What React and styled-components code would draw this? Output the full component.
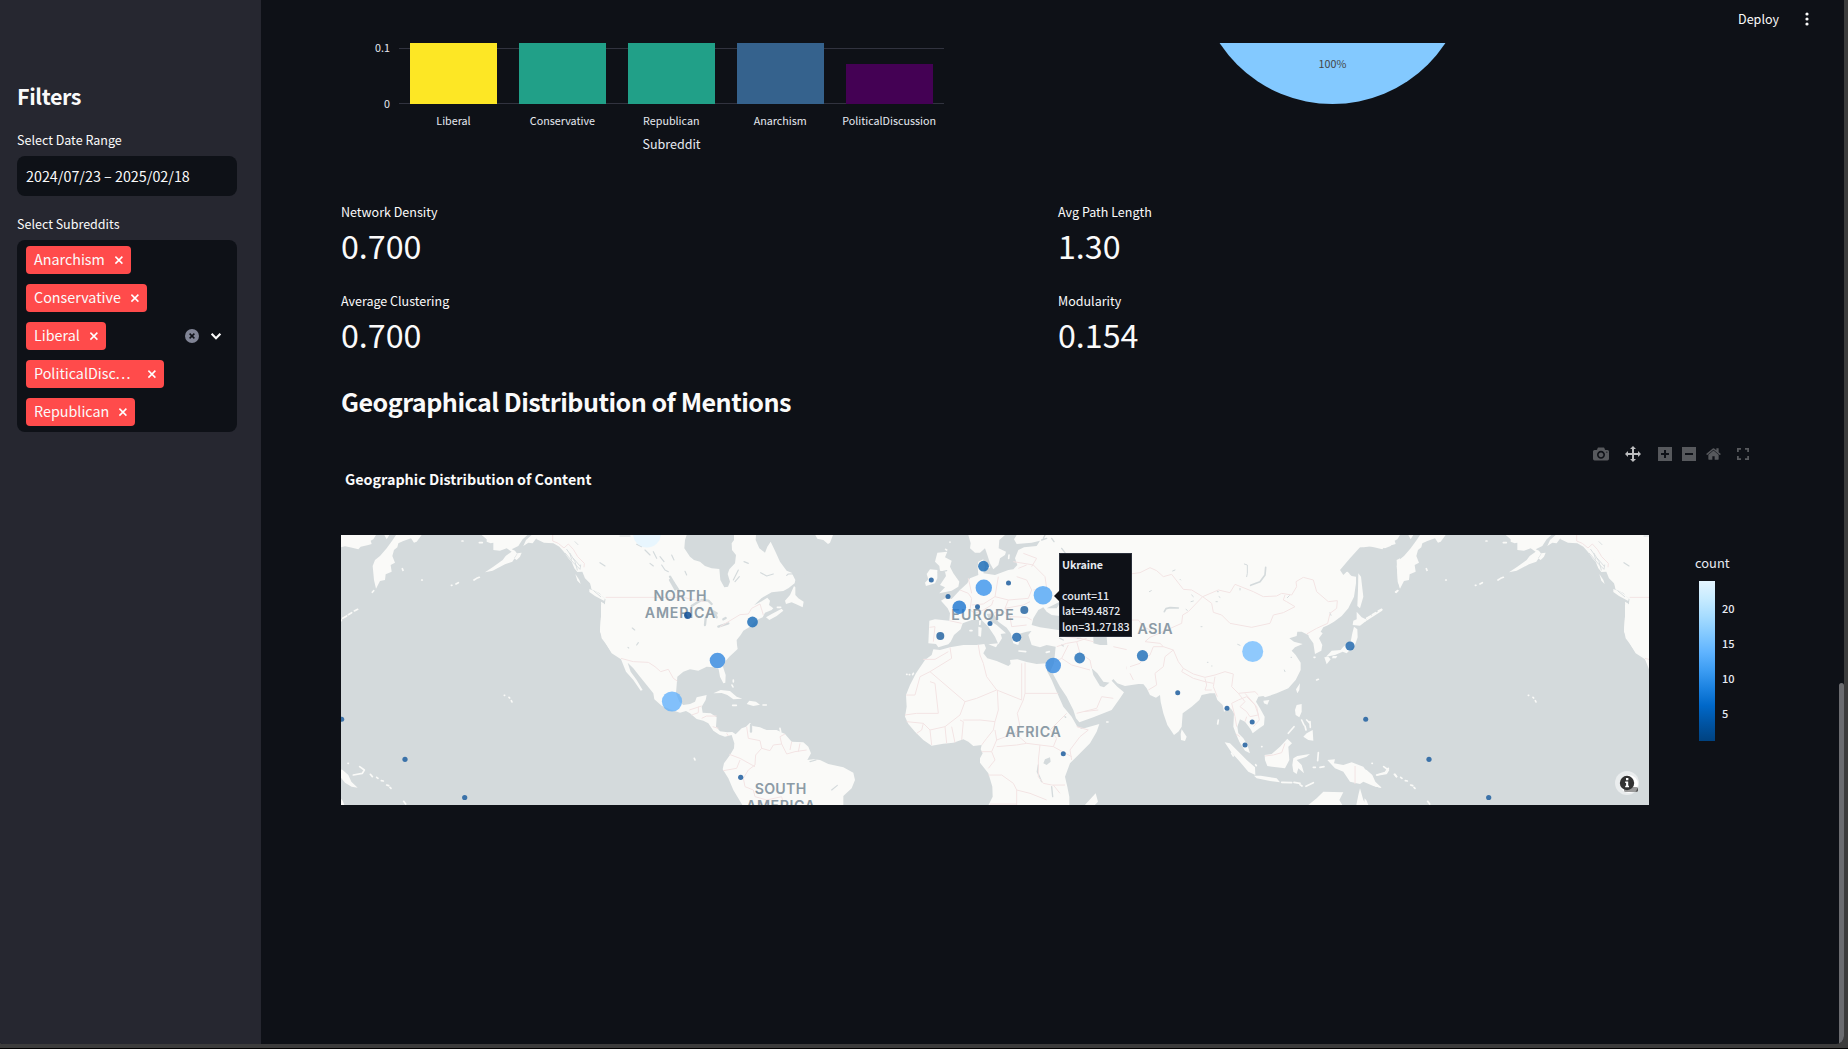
import React from "react";
import styled, { createGlobalStyle, css } from "styled-components";

const GlobalStyle = createGlobalStyle`
  * { box-sizing: border-box; }
  html, body { margin: 0; padding: 0; overflow: hidden; }
  body {
    background: #000;
    color: #fafafa;
    font-family: "Source Sans Pro", "Noto Sans CJK JP", "Noto Sans", sans-serif;
  }
`;

const Frame = styled.div`
  width: 1848px;
  height: 1048px;
  background: #3c3c3c;
  padding: 0 4px 4px 0;
`;

const Shell = styled.div`
  display: flex;
  position: relative;
  width: 1844px;
  height: 1044px;
  background: #0e1117;
  border-radius: 0 0 8px 3px;
  overflow: hidden;
`;

const Scrollbar = styled.div`
  position: absolute;
  right: 0;
  top: 683px;
  bottom: 0;
  width: 5px;
  border-radius: 3px 3px 0 0;
  background: #6b6c70;
`;

const Sidebar = styled.aside`
  flex: 0 0 261px;
  background: #262730;
  padding: 79px 24px 0 17px;
  display: flex;
  flex-direction: column;
`;

const SidebarTitle = styled.h2`
  margin: 0 0 17px;
  font-size: 21.5px;
  line-height: 34px;
  font-weight: 600;
  letter-spacing: -0.4px;
`;

const FieldLabel = styled.label`
  font-size: 12.53px;
  line-height: 20px;
  margin-bottom: 6px;
`;

const DateInput = styled.div`
  height: 40px;
  border-radius: 8px;
  background: #0e1117;
  padding: 0 9px;
  margin-bottom: 18px;
  font-size: 14.33px;
  line-height: 40px;
`;

const MultiSelect = styled.div`
  display: flex;
  align-items: center;
  height: 192px;
  border-radius: 8px;
  background: #0e1117;
  padding: 0 11px 0 9px;
`;

const TagList = styled.div`
  flex: 1;
  display: flex;
  flex-direction: column;
  align-items: flex-start;
  gap: 10px;
`;

const Tag = styled.span`
  display: flex;
  align-items: center;
  justify-content: space-between;
  width: ${(p) => p.$width}px;
  height: 28px;
  padding: 0 7.5px 0 8px;
  border-radius: 4px;
  background: #ff4b4b;
  font-size: 14.33px;
  line-height: 26px;
  white-space: nowrap;
`;

const TagText = styled.span`
  padding-bottom: 2px;
`;

const Ellipsis = styled.span`
  letter-spacing: 1.4px;
`;

const SelectActions = styled.div`
  display: flex;
  align-items: center;
  gap: 7px;
`;

const Main = styled.main`
  flex: 1;
  display: flex;
  flex-direction: column;
`;

const TopBar = styled.header`
  height: 43px;
  display: flex;
  justify-content: flex-end;
  align-items: flex-start;
  gap: 20px;
  padding: 9px 29px 0 0;
  font-size: 12.53px;
  line-height: 20px;
`;

const Content = styled.div`
  padding: 0 0 0 80px;
  display: flex;
  flex-direction: column;
`;

const Columns = styled.div`
  display: grid;
  grid-template-columns: 701px 701px;
  column-gap: 16px;
  svg { display: block; }
`;

const ChartRow = styled(Columns)`
  height: 157px;
`;

const Metric = styled.div`
  height: 89px;
`;

const MetricLabel = styled.div`
  font-size: 12.53px;
  line-height: 24px;
`;

const MetricValue = styled.div`
  font-size: 32.2px;
  line-height: 42px;
`;

const SectionTitle = styled.h3`
  margin: 2px 0 0;
  font-size: 25.1px;
  line-height: 42px;
  font-weight: 600;
  letter-spacing: -0.51px;
`;

const ModeBar = styled.div`
  display: flex;
  align-items: center;
  justify-content: flex-end;
  width: 1408px;
  height: 16px;
  margin-top: 24px;
  color: #57595d;
`;

const ModeIcon = styled.svg`
  flex: none;
  height: 16px;
  width: ${(p) => p.$width}px;
  margin-left: ${(p) => p.$gap}px;
  fill: ${(p) => (p.$active ? "#bdbec0" : "#57595d")};
`;

const ChartTitle = styled.div`
  margin: 4px 0 44px 4px;
  font-size: 14.33px;
  line-height: 25px;
  font-weight: 700;
`;

const MapRow = styled.div`
  display: flex;
  gap: 46px;
`;

const MapFrame = styled.div`
  position: relative;
  width: 1308px;
  height: 270px;
  background: #d4dadc;
  overflow: hidden;
  svg { display: block; }
`;

const Tooltip = styled.div`
  position: absolute;
  left: 718px;
  top: 18px;
  width: 73px;
  height: 84px;
  padding: 2.5px 0 0 2px;
  background: #0e1117;
  border: 1px solid #2a2f3a;
  color: #e6eaf1;
  font-size: 10.74px;
  line-height: 15.6px;
  font-weight: 500;
  letter-spacing: -0.1px;
  white-space: nowrap;
  &::before {
    content: "";
    position: absolute;
    left: -6px;
    top: 36px;
    border: 6px solid transparent;
    border-left: 0;
    border-right-color: #0e1117;
  }
`;

const TooltipTitle = styled.div`
  font-weight: 700;
  margin-bottom: 15.6px;
`;

const Legend = styled.div`
  display: flex;
  flex-direction: column;
  padding-top: 18px;
  color: #e6eaf1;
`;

const LegendTitle = styled.div`
  font-size: 12.9px;
  line-height: 20px;
`;

const LegendBody = styled.div`
  display: flex;
  gap: 7px;
  margin: 8px 0 0 4px;
`;

const Gradient = styled.div`
  width: 16px;
  height: 160px;
  background: linear-gradient(to top, #004280, #0054a3 11.1%, #0068c9 22.2%, #1c83e1 33.3%, #3d9df3 44.4%, #60b4ff 55.6%, #83c9ff 66.7%, #a6dcff 77.8%, #c7ebff 88.9%, #e4f5ff);
`;

const Ticks = styled.div`
  display: flex;
  flex-direction: column;
  padding-top: 17px;
  gap: 15px;
  font-size: 11px;
  line-height: 20px;
  font-weight: 500;
`;

const chartFont = css`
  font-family: "Noto Sans CJK JP", "Noto Sans", sans-serif;
`;

const ChartText = styled.text`
  ${chartFont}
  fill: ${(p) => p.$color || "#e6eaf1"};
  font-size: ${(p) => p.$size || 10.74}px;
  text-anchor: ${(p) => p.$anchor || "middle"};
`;

const Continent = styled.text`
  font-family: Inter, "Open Sans", sans-serif;
  font-size: 14.2px;
  font-weight: 600;
  fill: #8c9ba6;
  text-anchor: middle;
`;

const Land = styled.path`
  fill: #fafaf8;
`;
const Water = styled.path`
  fill: #d4dadc;
`;
const Lakes = styled.path`
  fill: none;
  stroke: #d4dadc;
  stroke-width: ${(p) => p.$w || 4};
  stroke-linecap: round;
  stroke-linejoin: round;
`;
const Islands = styled(Lakes)`
  stroke: #fafaf8;
`;
const Borders = styled.path`
  fill: none;
  stroke: #f3e4e4;
  stroke-width: 3;
  stroke-linejoin: round;
`;

const bars = [
  { name: "Liberal", color: "#fde725", top: 0 },
  { name: "Conservative", color: "#21a088", top: 0 },
  { name: "Republican", color: "#21a088", top: 0 },
  { name: "Anarchism", color: "#35628d", top: 0 },
  { name: "PoliticalDiscussion", color: "#440154", top: 21 },
];

function BarChart() {
  return (
    <svg width="701" height="157">
      <path d="M58 5.5H603M58 60.5H603" stroke="#31333f" />
      {bars.map((b, i) => (
        <g key={b.name}>
          <rect x={69 + i * 109} y={b.top} width="87" height={61 - b.top} fill={b.color} />
          <ChartText x={112.5 + i * 108.9} y="82">{b.name}</ChartText>
        </g>
      ))}
      <ChartText x="49" y="9" $anchor="end">0.1</ChartText>
      <ChartText x="49" y="65" $anchor="end">0</ChartText>
      <ChartText x="330.5" y="106" $size={12.53}>Subreddit</ChartText>
    </svg>
  );
}

function PieChart() {
  return (
    <svg width="701" height="157">
      <circle cx="274.5" cy="-74" r="135" fill="#83c9ff" />
      <ChartText x="274.5" y="25" $color="#444">100%</ChartText>
    </svg>
  );
}

const tags = [
  { name: "Anarchism", width: 105 },
  { name: "Conservative", width: 121 },
  { name: "Liberal", width: 80 },
  { name: "PoliticalDisc", width: 138, truncated: true },
  { name: "Republican", width: 109 },
];

const CloseIcon = () => (
  <svg width="10" height="10" viewBox="0 0 10 10" stroke="#fff" strokeWidth="1.5" fill="none">
    <path d="M1.400 1.600 8.400 8.600M8.400 1.600 1.400 8.600" />
  </svg>
);

const modeIcons = [
  { w: 16, gap: 0, vw: 1000, d: "m500 450c-83 0-150-67-150-150 0-83 67-150 150-150 83 0 150 67 150 150 0 83-67 150-150 150z m400 150h-120c-16 0-34 13-39 29l-31 93c-6 15-23 28-40 28h-340c-16 0-34-13-39-28l-31-94c-6-15-23-28-40-28h-120c-55 0-100-45-100-100v-450c0-55 45-100 100-100h800c55 0 100 45 100 100v450c0 55-45 100-100 100z m-400-550c-138 0-250 112-250 250 0 138 112 250 250 250 138 0 250-112 250-250 0-138-112-250-250-250z m365 380c-19 0-35 16-35 35 0 19 16 35 35 35 19 0 35-16 35-35 0-19-16-35-35-35z" },
  { w: 16, gap: 16, vw: 1000, active: true, d: "m1000 350l-187 188 0-125-250 0 0 250 125 0-188 187-187-187 125 0 0-250-250 0 0 125-188-188 186-187 0 125 252 0 0-250-125 0 187-188 188 188-125 0 0 250 250 0 0-126 187 188z" },
  { w: 14, gap: 17, vw: 875, d: "m1 787l0-875 875 0 0 875-875 0z m687-500l-187 0 0-187-125 0 0 187-188 0 0 125 188 0 0 187 125 0 0-187 187 0 0-125z" },
  { w: 14, gap: 10, vw: 875, d: "m0 788l0-876 876 0 0 876-876 0z m688-500l-500 0 0 125 500 0 0-125z" },
  { w: 15, gap: 10, vw: 928.6, d: "m786 296v-267q0-15-11-26t-25-10h-214v214h-143v-214h-214q-15 0-25 10t-11 26v267q0 1 0 2t0 2l321 264 321-264q1-1 1-4z m124 39l-34-41q-5-5-12-6h-2q-7 0-12 3l-386 322-386-322q-7-4-13-4-7 2-12 7l-35 41q-4 5-3 13t6 12l401 334q18 15 42 15t43-15l136-114v109q0 8 5 13t13 5h107q8 0 13-5t5-13v-227l122-102q5-5 6-12t-4-13z" },
];

/* Each tile is drawn on a grid three times finer than the map itself. */
const Tile = ({ x, children }) => (
  <g transform={`translate(${x} -5) scale(.33333)`}>{children}</g>
);

function World() {
  return (
    <>
      <Tile x={-1}>
        <Land d="M-60 15H108L100 28 92 32 95 42 85 45 62 50 55 58 30 52 15 49 0 52-60 50Z M133 15H148L140 28Z M168 15H245L230 35 222 38 213 25 190 33 175 40 172 52 162 60 157 78 165 98 152 105 155 125 137 133 135 150 120 153 108 176 102 150 98 108 105 90 120 78 140 55 158 30Z" />
        <Land d="M425 15 440 28 440 35 452 40 460 38 460 60 480 62 500 55 515 65 497 78 488 90 460 110 435 127 458 122 495 103 517 95 532 72 525 62 515 58 535 48 548 28 555 22 562 15Z M550 48 558 30 575 15H600L588 26 578 40 565 38Z M522 85 532 70 545 68 540 80 530 90Z" />
        <Land d="M585 15 590 28 612 38 640 40 658 50 672 66 685 85 695 95 703 115 712 126 727 125 735 145 750 160 755 178 775 186 797 208 795 222 783 215 784 240 783 260 780 305 792 328 800 345 812 362 830 370 843 385 860 388V15Z M706 132 718 150 722 162 712 152Z M748 177 770 185 797 205 793 213 765 198 748 186Z" />
        <Islands $w={5} d="M402 150 410 145 418 142M187 116 189 121M245 150H247M334 166H336M348 162 355 158M97 187 101 182M8 265 20 258M25 254 35 248M43 243 53 238M4 272V270M493 496H494M507 502 509 504M514 512 516 516M418 38H427M366 33H369M24 700H25M91 733 97 740M110 742 114 745M124 752 130 753M140 765 146 767M150 772 153 775M191 814 197 822M59 710 73 720 67 730 40 735" />
        <Land d="M-10 715 8 720 25 735 34 755 53 773 35 770 15 758 0 740Z M2 805 8 812 13 825H0Z" />
        <Lakes $w={2.5} d="M680 58 690 72 695 88M690 70 705 95 712 120M700 85 720 108M676 70 700 98 720 118 722 105M762 183 782 200M705 35 714 44M779 95 786 105 797 108 788 112M795 208 793 225" />
        <Borders d="M638 15V33L655 40 672 54 685 42 700 58 713 80 733 100 732 112M797 202H860" />
      </Tile>

      <Tile x={249}>
        <Land d="M-5 15H290L285 30 283 55 300 80 312 90 330 95 345 108 365 115 388 117 391 150 403 172 414 170 420 155 413 132 418 118 435 100 438 75 426 60 425 40 432 30 432 15H498L497 30 508 55 525 68 532 50 542 35 555 62 570 95 590 122 605 128 616 150 614 160 595 175 580 183 545 187 515 204 492 226 515 214 532 203 540 212 537 225 550 235 545 240 525 248 518 262 500 270 480 290 460 302 452 315 440 330 441 345 443 357 418 380 402 398 399 410 407 435 406 458 400 460 390 440 386 418 372 412 350 410 325 422 300 418 280 425 262 440 258 490 268 515 280 525 300 522 315 515 320 502 350 495 347 510 335 530 338 548 362 550 380 562 378 590 390 604 412 607 427 606 437 613 455 595 468 590 480 578 488 588 510 592 530 600 560 600 585 612 605 635 640 637 655 650 663 670 652 690 670 688 690 690 715 702 760 712 790 728 795 750 785 775 760 798V830H460L430 780 415 745 398 718 402 700 420 675 432 655 433 640 425 615 405 620 388 614 370 602 355 580 340 572 320 567 300 550 288 543 270 548 245 540 215 527 193 508 190 490 170 465 150 440 130 415 113 398 122 425 140 450 158 480 152 482 130 450 108 425 93 388 65 370 50 345 35 325 30 300 33 260 33 225 45 222 47 208 30 190 5 178Z" />
        <Land d="M612 168 600 195 585 212 588 222 605 217 622 224 638 232 641 215 625 205 616 195 616 172Z M528 262 545 252 575 236 580 242 560 258 538 270Z M676 15H729L720 38 714 42 700 30 682 26Z M370 490 392 480 420 483 440 500 457 506 430 508 412 495 395 489Z M470 522 478 512 498 515 510 524 490 528Z" />
        <Islands $w={5} d="M428 526H439M519 525H529M426 465 429 471M430 450V456M313 685 315 690M562 232H572M570 595 572 605" />
        <Lakes $w={7} d="M305 228 318 220 335 210 355 212 365 222M345 285 347 265 355 250M362 240 380 250M372 245 380 262M385 290 415 280M400 268 407 264M240 140 255 165 268 185M240 150 256 178M483 585V605" />
        <Lakes $w={3.5} d="M90 18H120M140 43 155 50M165 60 180 75M190 65 200 85M210 80 222 95M215 105 225 120 235 125M245 75 252 90M30 98 45 108M180 100 190 108M250 155 265 180M285 124 290 135M127 294 134 300M140 345 145 338M114 352 116 354M430 150 445 120M435 155 448 140M512 128 530 138 550 132M660 130 595 132 590 136M462 95 475 100M390 95 400 98M725 780 742 766M660 695 678 690" />
        <Borders d="M47 202H280L305 208 345 215M390 290 450 254 475 252 485 235 510 222 520 255M93 385 130 395 175 397 195 410 212 425 235 418 250 445 262 453M298 540 335 528M305 555 325 548 325 530M335 565 350 558 380 558M368 590 385 595M410 610 415 618M470 590 475 625 510 632 515 655 497 675 495 705 475 720 460 745 465 770 490 780M515 655 540 662 550 645 575 642 590 672 615 665 650 660M575 642 570 620 585 612M605 635 600 660M630 640 625 665M418 673 450 685 495 710M400 722 440 715 450 690M490 780 495 800 530 810 575 800 580 820" />
      </Tile>

      <Tile x={539}>
        <Land d="M160 358 180 360 210 352 250 345 290 345 313 342 318 355 310 370 322 385 350 393 385 408 392 402 390 390 412 388 440 396 470 402 500 400 502 425 515 450 530 485 550 530 575 560 592 590 605 597 658 582 650 605 630 640 595 675 570 700 555 740 562 770 568 800 568 830H323L338 800 337 770 325 730 300 698 300 685 308 670 302 658 305 645 280 648 265 635 250 628 220 638 190 641 155 647 130 630 105 605 85 582 75 560 80 530 78 495 90 465 108 430 135 390 155 375Z M647 790 654 815 640 830H610Z" />
        <Land d="M148 272 165 268 208 272 210 250 203 235 183 212 195 205 215 207 240 180 262 160 270 145 295 135 293 110 295 95 310 88 315 110 310 130 345 135 385 120 400 118 412 105 405 85 415 60 432 52 470 48 480 32 455 38 410 42 402 28 410 15H900V465L775 462 735 468 712 460 700 447 690 458 670 455 652 430 635 415 640 435 660 468 672 472 695 452 712 470 732 487 720 505 695 540 640 562 598 577 588 565 580 540 560 500 540 470 518 430 510 425 522 400 527 350 500 345 480 352 455 345 445 315 455 302 490 290 470 300 440 305 415 312 420 325 415 345 400 340 392 310 380 293 355 275 340 250 320 252 330 272 350 285 378 310 362 312 366 325 355 343 345 320 325 290 305 270 275 270 248 280 242 298 222 315 212 335 205 343 175 352 168 342 145 340Z" />
        <Land d="M265 15H375L358 30 356 55 378 65 375 75 360 85 355 105 340 118 330 100 322 75 315 55 300 68 285 68 270 55 272 40Z M172 68 202 65 195 82 215 92 210 110 220 130 238 155 235 170 215 182 178 190 195 172 180 165 190 150 198 138 195 125 180 122 178 108 165 95Z M150 118 172 120 172 145 165 160 138 168 135 158 145 148 140 132Z M325 343 355 340 348 352Z M295 290 305 293 303 320 295 318Z M297 272 303 270 302 285 297 285Z" />
        <Islands $w={5} d="M80 433H81M88 434H89M100 430 98 434M210 36V37M197 58 200 60M417 363 437 365M499 367 508 365M270 302H276M320 112H328M387 75 386 85M680 576H684" />
        <Water d="M455 285 460 265 475 240 490 232 500 245 515 255 540 258 560 275 575 295 535 300 500 295 480 292Z M500 235 520 225 545 212 530 235Z M640 320 655 310 680 320 682 345 660 345 640 340Z M495 688 510 682 512 695 500 705 490 700Z" />
        <Lakes $w={4} d="M485 30 500 25M515 25 522 35M545 55 555 68M540 325 550 330M592 325H602M545 345 550 348M522 455 530 475M506 420 510 432M475 705 472 725 485 755M515 770 518 800M555 560 557 562M175 128 200 122M495 15 490 25" />
        <Borders d="M148 292 165 290 160 335M208 272 245 280M240 180 265 190 275 205 270 240 285 250M265 145 275 190M275 225 310 222 345 200 355 140M345 200 385 210 445 205 455 180 440 150 410 140M285 250 310 240 335 225 340 210M340 250 365 240 390 260 395 290M385 210 375 235 390 260 440 262 455 270M400 95 460 105 495 140 500 175 460 180M430 70 470 85 455 110M415 115 440 105M395 290 440 285M375 235 430 225 450 215M530 350 560 340 590 335 620 325M555 320 600 325 640 335M590 335 600 370 630 390 635 415M565 345 545 385 525 395M545 385 575 405 630 420M610 545 650 535 665 500 700 505M590 550 610 545 655 540M755 132 810 120M700 350 745 360 750 380 810 365M750 380 740 415 760 450M750 320 810 355" />
        <Borders d="M130 388 165 388 205 365M210 352 215 385 150 425 120 440 105 495H78M150 425 255 515 290 505 350 480 425 510V400M295 345 300 375 310 400 320 440 350 480M435 398V490H535M435 490 430 510 412 550 420 590 405 610 440 640 480 645 520 650 530 625 510 600 540 570 560 550M165 460 175 550H110L75 555M165 460 150 455M80 575 130 580 150 600 195 590 240 555 255 515M130 580 125 600 110 610M150 600 155 645M195 590 200 640M215 590 225 638M240 570 250 575 245 630M250 570 300 570 345 575 355 540 352 480M345 575 340 600 320 625 305 645M345 600 350 630 405 610M350 630 335 665 305 665M350 650 410 645 440 640M335 665 345 690 325 715M325 735H365L400 760 410 780 410 825M410 780 450 790 500 810M480 645 475 690 475 740 490 760 515 765 555 765M520 650 575 680M575 690 570 660 600 620 625 600 590 590M520 765 540 790M330 822H410" />
      </Tile>

      <Tile x={789}>
        <Land d="M-10 15H800L782 48 765 55 740 47 690 52 660 85 630 120 640 135 650 125 665 138 678 140 678 160 672 200 655 235 635 258 612 275 595 285 580 292 572 305 578 310 567 325 577 345 574 362 555 372 550 340 537 322 535 315 515 305 502 305 500 318 478 325 492 335 518 342 495 352 485 362 497 375 512 398 512 420 497 450 475 475 440 490 405 502 400 498 385 500 378 515 390 535 404 560 402 585 388 595 368 610 362 598 345 575 330 568 322 590 325 610 340 625 352 645 360 670 345 662 328 635 318 612 310 590 312 550 302 535 282 545 278 525 262 510 255 490 240 490 215 495 208 510 185 530 158 550 155 590 145 605 132 615 112 585 100 550 92 515 90 495 78 503 60 495 50 475 40 462-10 460Z" />
        <Land d="M155 598 170 620 165 633 153 630 152 612Z M685 130 693 140 700 200 690 235 682 228 684 180Z M680 245 695 262 712 270 690 287 668 285 670 272 680 268Z M672 290 682 298 683 322 675 345 650 370 638 365 615 375 588 380 605 362 632 360 640 350 662 335 667 310Z M583 382 595 380 602 388 590 403Z M608 378 622 378 618 385 606 385Z M510 460 508 480 502 490 498 478Z M400 512 418 510 412 524 402 520Z M500 525 515 522 515 545 508 562 497 555 495 540Z M530 610 548 600 550 632 535 630 520 620Z M284 637 300 640 330 670 350 690 375 712 376 735 355 725 325 690 305 668Z M372 737 392 737 440 745 450 757 420 753 380 745Z M404 675 425 672 450 650 472 626 486 640 475 650 478 690 465 715 440 712 412 708 405 690Z M490 685 502 678 540 672 530 680 500 690 515 705 522 730 505 715 500 732 490 725 487 705Z M592 690 615 688 612 700 640 705 665 697 700 710 718 735 730 755 756 774 730 768 700 755 690 762 660 755 640 725 615 715Z M535 825 560 805 580 785 640 787 628 810 640 830H530Z M690 775 700 810 712 830H678L685 795Z M800 90 810 85V175L803 155Z" />
        <Islands $w={5} d="M712 268 755 240M515 570 522 585M530 570 540 580M525 588 528 600M540 575 541 592M475 610 492 590M455 757 485 758M492 757 510 760M528 769 550 758M510 764 516 768M565 668 563 692M550 712 556 712M570 712 582 710M265 570 263 582M395 650H396M377 704 379 707M305 670 310 678M560 450 565 448M552 382H555M740 735 765 728 775 715M795 733 800 740M797 186 803 182M652 128 656 132" />
        <Lakes $w={5} d="M362 166 390 155 405 135 407 112M103 245 108 236 120 233 145 234" />
        <Lakes $w={3} d="M343 102 352 105 352 130 350 140M58 185 64 182M128 123 135 120M150 148 152 150M185 195 190 200M183 215 190 213M262 185H265M267 200 270 202M258 215H262M330 175V180M472 203 478 197M600 248 603 256M213 290H216M323 343 330 346M232 397H234M245 408H246M483 382H485M463 420 465 425M168 238 172 241" />
        <Borders d="M0 132 30 128 60 113 80 122 100 140 125 133 160 178 185 180 218 200 265 180 300 188 315 163 370 185 400 200 440 198 455 190 485 195 500 170 498 155 520 142 550 150 560 185 595 215 622 212 620 235 600 250 593 280 560 295 530 312M218 200 245 220 250 247 275 255 300 280 365 292 420 280 430 255 460 248 495 230 470 215 460 210 465 195M218 200 175 245 158 255 155 280 110 300 60 322 45 335 90 340 100 350 130 360 145 395 160 415 190 432 225 442 255 435 285 425 310 432 305 470 325 490 375 485 385 495M0 270 25 270 40 290 60 300M100 350 70 350 60 375 40 385 30 400 0 410M130 360 105 380 100 410 75 430 80 465 55 480M0 430 10 450M160 415 155 425 190 445 225 455 250 460M225 445 230 465 225 480 245 480M255 440 250 470 262 500M325 490 345 515 330 530 350 545 360 560 385 555 375 525 350 500 325 510 305 520 315 560 320 590M345 575 350 560M345 490 380 530 388 570 370 590M465 640 455 668 430 675 405 678M318 612 330 620" />
        <Borders d="M675 708V762" strokeWidth="5" />
      </Tile>
    </>
  );
}

/* [x, y, radius, colour, opacity] of every bubble */
const bubbles = [
  [306, -1.5, 14, "#e4f5ff", 0.8],
  [346.7, 80.3, 3.6, "#0f4f96", 0.85],
  [411.5, 87, 5.4, "#1f6fb8", 0.85],
  [376.5, 125.5, 7.8, "#2f86df", 0.8],
  [331, 166.5, 10.1, "#60b0fb", 0.78],
  [399.7, 242.3, 2.6, "#2a66a3", 0.9],
  [642.5, 31.2, 5.4, "#1f6fb8", 0.85],
  [590.3, 45, 2.5, "#2a66a3", 0.9],
  [607, 61.5, 2.5, "#2a66a3", 0.9],
  [667.5, 48, 2.5, "#2a66a3", 0.9],
  [642.8, 52.8, 8.2, "#3a93ec", 0.8],
  [618.3, 72.2, 6.8, "#1f78d1", 0.82],
  [636.5, 71.7, 2.5, "#2a66a3", 0.9],
  [683.3, 75, 4, "#20609f", 0.82],
  [649, 88.5, 2.5, "#2a66a3", 0.9],
  [599.3, 101, 4, "#20609f", 0.82],
  [675.7, 102.3, 4.6, "#1d65ac", 0.82],
  [702, 60.2, 9.3, "#4fa5f5", 0.8],
  [712.2, 130.5, 7.8, "#2f86df", 0.8],
  [738.7, 123, 5.4, "#1f6fb8", 0.82],
  [801.5, 120.7, 5.6, "#1f6fb8", 0.82],
  [722.3, 218.7, 2.5, "#2a66a3", 0.9],
  [911.7, 116.5, 10.5, "#6bb8ff", 0.75],
  [836.7, 157.7, 2.5, "#2a66a3", 0.9],
  [886, 173.3, 2.5, "#2a66a3", 0.9],
  [911.2, 187, 2.5, "#2a66a3", 0.9],
  [904, 210, 2.5, "#2a66a3", 0.9],
  [1009, 111, 4.6, "#1d65ac", 0.82],
  [1024.7, 184.3, 2.5, "#2a66a3", 0.9],
  [0.7, 184.3, 2.5, "#2a66a3", 0.9],
  [64, 224.3, 2.6, "#2a66a3", 0.9],
  [1088, 224.3, 2.6, "#2a66a3", 0.9],
  [123.7, 262.5, 2.6, "#2a66a3", 0.9],
  [1147.7, 262.5, 2.6, "#2a66a3", 0.9],
];

const labels = [
  ["NORTH", 339, 66, 53],
  ["AMERICA", 339, 83, 70.5],
  ["EUROPE", 641.5, 85, 62.5],
  ["ASIA", 814, 99, 35],
  ["AFRICA", 692, 202, 55.5],
  ["SOUTH", 439.5, 259, 51.5],
  ["AMERICA", 439.5, 276, 69],
];

function GeoMap() {
  return (
    <MapFrame>
      <svg width="1308" height="270" viewBox="0 0 1308 270">
        <World />
        <g transform="translate(1024 0)">
          <World />
        </g>
        {labels.map(([t, x, y, w], i) => (
          <Continent key={i} x={x} y={y} textLength={w}>{t}</Continent>
        ))}
        {bubbles.map(([x, y, r, c, o], i) => (
          <circle key={i} cx={x} cy={y} r={r} fill={c} fillOpacity={o} />
        ))}
        <circle cx="1286" cy="248" r="12" fill="#fff" fillOpacity=".5" />
        <circle cx="1288" cy="249" r="9" fill="#fff" />
        <rect x="1283" y="252" width="14" height="5" rx="1.500" fill="#999" />
        <path d="M1294.500 257 1297 252.500V256Z" fill="#555" />
        <circle cx="1286" cy="248" r="7.2" fill="#333" />
        <path d="M1285 243h2.4v2.2h-2.4zM1284.2 246.6h3v4.2h.8v1.4h-3.8v-1.4h.9v-2.8h-.9z" fill="#fff" />
      </svg>
      <Tooltip>
        <TooltipTitle>Ukraine</TooltipTitle>
        <div>count=11</div>
        <div>lat=49.4872</div>
        <div>lon=31.27183</div>
      </Tooltip>
    </MapFrame>
  );
}

export default function App() {
  return (
    <Frame>
      <GlobalStyle />
      <Shell>
        <Sidebar>
          <SidebarTitle>Filters</SidebarTitle>
          <FieldLabel>Select Date Range</FieldLabel>
          <DateInput>2024/07/23 – 2025/02/18</DateInput>
          <FieldLabel>Select Subreddits</FieldLabel>
          <MultiSelect>
            <TagList>
              {tags.map((t) => (
                <Tag key={t.name} $width={t.width}>
                  <TagText>
                    {t.name}
                    {t.truncated && <Ellipsis>...</Ellipsis>}
                  </TagText>
                  <CloseIcon />
                </Tag>
              ))}
            </TagList>
            <SelectActions>
              <svg width="14" height="14" viewBox="0 0 14 14">
                <circle cx="7" cy="7" r="7" fill="#808495" />
                <path d="M4.6 4.6 9.4 9.4M9.4 4.6 4.6 9.4" stroke="#0e1117" strokeWidth="1.5" />
              </svg>
              <svg width="20" height="20" viewBox="0 0 20 20">
                <path d="M5.600 7.800 10 12.200 14.400 7.800" fill="none" stroke="#fafafa" strokeWidth="2.2" />
              </svg>
            </SelectActions>
          </MultiSelect>
        </Sidebar>
        <Main>
          <TopBar>
            <span>Deploy</span>
            <svg width="16" height="20" viewBox="0 0 16 20" fill="#fafafa">
              <circle cx="8" cy="5" r="1.6" />
              <circle cx="8" cy="10" r="1.6" />
              <circle cx="8" cy="15" r="1.6" />
            </svg>
          </TopBar>
          <Content>
            <ChartRow>
              <BarChart />
              <PieChart />
            </ChartRow>
            <Columns>
              <Metric>
                <MetricLabel>Network Density</MetricLabel>
                <MetricValue>0.700</MetricValue>
              </Metric>
              <Metric>
                <MetricLabel>Avg Path Length</MetricLabel>
                <MetricValue>1.30</MetricValue>
              </Metric>
              <Metric>
                <MetricLabel>Average Clustering</MetricLabel>
                <MetricValue>0.700</MetricValue>
              </Metric>
              <Metric>
                <MetricLabel>Modularity</MetricLabel>
                <MetricValue>0.154</MetricValue>
              </Metric>
            </Columns>
            <SectionTitle>Geographical Distribution of Mentions</SectionTitle>
            <ModeBar>
              {modeIcons.map((ic, i) => (
                <ModeIcon key={i} $width={ic.w} $gap={ic.gap} $active={ic.active} viewBox={`0 0 ${ic.vw} 1000`}>
                  <path transform="matrix(1 0 0 -1 0 850)" d={ic.d} />
                </ModeIcon>
              ))}
              <ModeIcon $width={12} $gap={16} viewBox="0 0 12 16">
                <path d="M0 6V2h4v1.8H1.8V6zM8 2h4v4h-1.8V3.8H8zM0 10h1.8v2.2H4V14H0zM10.2 10H12v4H8v-1.800h2.200z" />
              </ModeIcon>
            </ModeBar>
            <ChartTitle>Geographic Distribution of Content</ChartTitle>
            <MapRow>
              <GeoMap />
              <Legend>
                <LegendTitle>count</LegendTitle>
                <LegendBody>
                  <Gradient />
                  <Ticks>
                    <span>20</span>
                    <span>15</span>
                    <span>10</span>
                    <span>5</span>
                  </Ticks>
                </LegendBody>
              </Legend>
            </MapRow>
          </Content>
        </Main>
        <Scrollbar />
      </Shell>
    </Frame>
  );
}
